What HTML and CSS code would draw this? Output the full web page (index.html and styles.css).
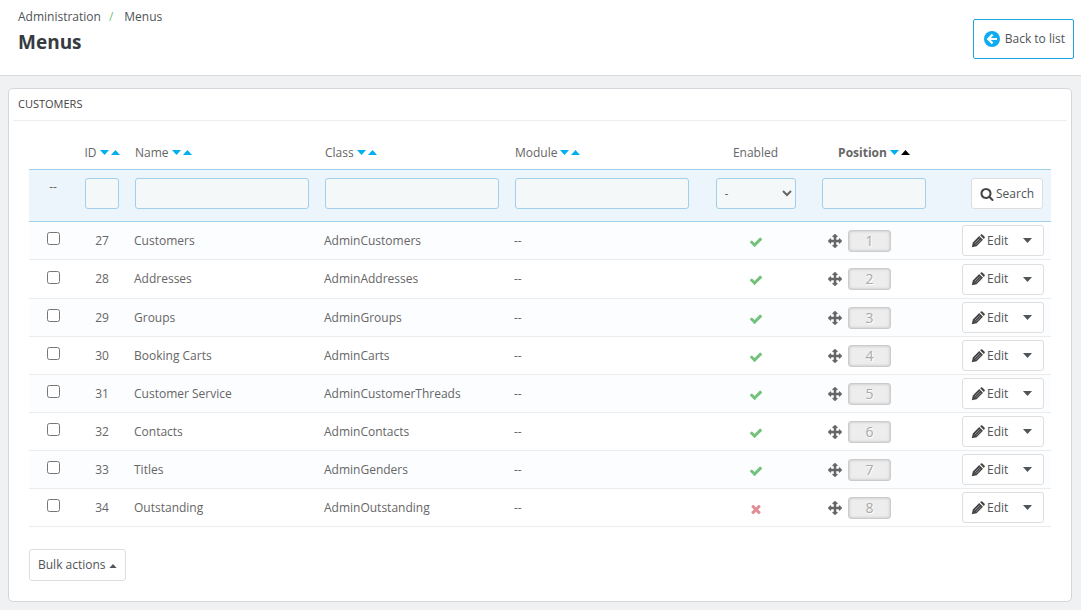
FILE: index.html
```html
<!DOCTYPE html>
<html lang="en">
<head>
<meta charset="utf-8">
<title>Menus</title>
<link rel="stylesheet" href="styles.css">
</head>
<body>
<svg class="sprite" aria-hidden="true">
  <symbol id="check" viewBox="0 0 1792 1792"><path d="M1671 566q0 40-28 68l-724 724-136 136q-28 28-68 28t-68-28l-136-136-362-362q-28-28-28-68t28-68l136-136q28-28 68-28t68 28l294 295 656-657q28-28 68-28t68 28l136 136q28 28 28 68z"/></symbol>
  <symbol id="times" viewBox="0 0 1792 1792"><path d="M1490 1322q0 40-28 68l-136 136q-28 28-68 28t-68-28l-294-294-294 294q-28 28-68 28t-68-28l-136-136q-28-28-28-68t28-68l294-294-294-294q-28-28-28-68t28-68l136-136q28-28 68-28t68 28l294 294 294-294q28-28 68-28t68 28l136 136q28 28 28 68t-28 68l-294 294 294 294q28 28 28 68z"/></symbol>
  <symbol id="move" viewBox="0 0 1792 1792"><path stroke="currentColor" stroke-width="60" d="M1792 896q0 26-19 45l-256 256q-19 19-45 19t-45-19-19-45v-128h-384v384h128q26 0 45 19t19 45-19 45l-256 256q-19 19-45 19t-45-19l-256-256q-19-19-19-45t19-45 45-19h128v-384h-384v128q0 26-19 45t-45 19-45-19l-256-256q-19-19-19-45t19-45l256-256q19-19 45-19t45 19 19 45v128h384v-384h-128q-26 0-45-19t-19-45 19-45l256-256q19-19 45-19t45 19l256 256q19 19 19 45t-19 45-45 19h-128v384h384v-128q0-26 19-45t45-19 45 19l256 256q19 19 19 45z"/></symbol>
  <symbol id="pencil" viewBox="0 0 14 14"><path d="M.8 13.200l1-4.800L8.200 2l3.800 3.800L5.600 12.200zM9.100 1.200l.9-.8q.7-.5 1.300 0l2.300 2.300q.5.600 0 1.300l-.8.900z"/><path d="M3.600 9.400l5-5M4.900 10.700l5-5" fill="none" stroke="#fff" stroke-width=".4"/></symbol>
  <symbol id="search" viewBox="0 0 1792 1792"><path d="M1216 832q0-185-131.500-316.500t-316.500-131.500-316.500 131.500-131.500 316.500 131.500 316.500 316.500 131.500 316.500-131.500 131.500-316.500zm512 832q0 52-38 90t-90 38q-54 0-90-38l-343-342q-179 124-399 124-143 0-273.500-55.500t-225-150-150-225-55.500-273.500 55.500-273.500 150-225 225-150 273.500-55.500 273.500 55.500 225 150 150 225 55.500 273.500q0 220-124 399l343 343q37 37 37 90z"/></symbol>
  <symbol id="back" viewBox="0 0 16 16"><circle cx="8" cy="8" r="8"/><path d="M13 8H4.500M8.600 3.600L4.200 8l4.400 4.400" fill="none" stroke="#fff" stroke-width="2.200"/></symbol>
  <symbol id="down" viewBox="0 0 9 5"><path d="M0 0h9L4.500 5z"/></symbol>
  <symbol id="up" viewBox="0 0 9 5"><path d="M0 5h9L4.500 0z"/></symbol>
</svg>
<header class="page-head">
  <div>
    <nav class="breadcrumb" aria-label="Breadcrumb"><a href="#">Administration</a><span class="slash">/</span><a href="#">Menus</a></nav>
    <h1>Menus</h1>
  </div>
  <a class="back" href="#"><svg class="icon16"><use href="#back"/></svg>Back to list</a>
</header>
<main class="panel">
  <h2>CUSTOMERS</h2>
  <div class="panel-body">
    <table>
      <colgroup><col class="c-check"><col class="c-id"><col><col><col><col class="c-enabled"><col class="c-position"><col class="c-actions"></colgroup>
      <thead>
        <tr class="titles">
          <th></th>
          <th class="center"><span class="sort">ID <svg><use href="#down"/></svg><svg><use href="#up"/></svg></span></th>
          <th><span class="sort">Name <svg><use href="#down"/></svg><svg><use href="#up"/></svg></span></th>
          <th><span class="sort">Class <svg><use href="#down"/></svg><svg><use href="#up"/></svg></span></th>
          <th><span class="sort">Module <svg><use href="#down"/></svg><svg><use href="#up"/></svg></span></th>
          <th class="center">Enabled</th>
          <th class="center"><span class="sort sorted">Position <svg><use href="#down"/></svg><svg class="on"><use href="#up"/></svg></span></th>
          <th></th>
        </tr>
        <tr class="filters">
          <td class="center">--</td>
          <td><input type="text" aria-label="ID"></td>
          <td><input type="text" aria-label="Name"></td>
          <td><input type="text" aria-label="Class"></td>
          <td><input type="text" aria-label="Module"></td>
          <td class="center"><select aria-label="Enabled"><option>-</option><option>Yes</option><option>No</option></select></td>
          <td><input type="text" aria-label="Position"></td>
          <td class="right"><button class="btn search" type="button"><svg class="icon14"><use href="#search"/></svg>Search</button></td>
        </tr>
      </thead>
      <tbody>
        <tr><td class="center"><input type="checkbox" aria-label="Customers"></td><td class="center">27</td><td>Customers</td><td>AdminCustomers</td><td>--</td><td class="center"><svg class="state yes"><use href="#check"/></svg></td><td><div class="pos"><svg class="icon14"><use href="#move"/></svg><span class="badge">1</span></div></td><td><div class="group"><button type="button" class="edit"><svg class="icon14"><use href="#pencil"/></svg>Edit</button><button type="button" class="more" aria-label="More"><svg class="caret"><use href="#down"/></svg></button></div></td></tr>
        <tr><td class="center"><input type="checkbox" aria-label="Addresses"></td><td class="center">28</td><td>Addresses</td><td>AdminAddresses</td><td>--</td><td class="center"><svg class="state yes"><use href="#check"/></svg></td><td><div class="pos"><svg class="icon14"><use href="#move"/></svg><span class="badge">2</span></div></td><td><div class="group"><button type="button" class="edit"><svg class="icon14"><use href="#pencil"/></svg>Edit</button><button type="button" class="more" aria-label="More"><svg class="caret"><use href="#down"/></svg></button></div></td></tr>
        <tr><td class="center"><input type="checkbox" aria-label="Groups"></td><td class="center">29</td><td>Groups</td><td>AdminGroups</td><td>--</td><td class="center"><svg class="state yes"><use href="#check"/></svg></td><td><div class="pos"><svg class="icon14"><use href="#move"/></svg><span class="badge">3</span></div></td><td><div class="group"><button type="button" class="edit"><svg class="icon14"><use href="#pencil"/></svg>Edit</button><button type="button" class="more" aria-label="More"><svg class="caret"><use href="#down"/></svg></button></div></td></tr>
        <tr><td class="center"><input type="checkbox" aria-label="Booking Carts"></td><td class="center">30</td><td>Booking Carts</td><td>AdminCarts</td><td>--</td><td class="center"><svg class="state yes"><use href="#check"/></svg></td><td><div class="pos"><svg class="icon14"><use href="#move"/></svg><span class="badge">4</span></div></td><td><div class="group"><button type="button" class="edit"><svg class="icon14"><use href="#pencil"/></svg>Edit</button><button type="button" class="more" aria-label="More"><svg class="caret"><use href="#down"/></svg></button></div></td></tr>
        <tr><td class="center"><input type="checkbox" aria-label="Customer Service"></td><td class="center">31</td><td>Customer Service</td><td>AdminCustomerThreads</td><td>--</td><td class="center"><svg class="state yes"><use href="#check"/></svg></td><td><div class="pos"><svg class="icon14"><use href="#move"/></svg><span class="badge">5</span></div></td><td><div class="group"><button type="button" class="edit"><svg class="icon14"><use href="#pencil"/></svg>Edit</button><button type="button" class="more" aria-label="More"><svg class="caret"><use href="#down"/></svg></button></div></td></tr>
        <tr><td class="center"><input type="checkbox" aria-label="Contacts"></td><td class="center">32</td><td>Contacts</td><td>AdminContacts</td><td>--</td><td class="center"><svg class="state yes"><use href="#check"/></svg></td><td><div class="pos"><svg class="icon14"><use href="#move"/></svg><span class="badge">6</span></div></td><td><div class="group"><button type="button" class="edit"><svg class="icon14"><use href="#pencil"/></svg>Edit</button><button type="button" class="more" aria-label="More"><svg class="caret"><use href="#down"/></svg></button></div></td></tr>
        <tr><td class="center"><input type="checkbox" aria-label="Titles"></td><td class="center">33</td><td>Titles</td><td>AdminGenders</td><td>--</td><td class="center"><svg class="state yes"><use href="#check"/></svg></td><td><div class="pos"><svg class="icon14"><use href="#move"/></svg><span class="badge">7</span></div></td><td><div class="group"><button type="button" class="edit"><svg class="icon14"><use href="#pencil"/></svg>Edit</button><button type="button" class="more" aria-label="More"><svg class="caret"><use href="#down"/></svg></button></div></td></tr>
        <tr><td class="center"><input type="checkbox" aria-label="Outstanding"></td><td class="center">34</td><td>Outstanding</td><td>AdminOutstanding</td><td>--</td><td class="center"><svg class="state no"><use href="#times"/></svg></td><td><div class="pos"><svg class="icon14"><use href="#move"/></svg><span class="badge">8</span></div></td><td><div class="group"><button type="button" class="edit"><svg class="icon14"><use href="#pencil"/></svg>Edit</button><button type="button" class="more" aria-label="More"><svg class="caret"><use href="#down"/></svg></button></div></td></tr>
      </tbody>
    </table>
    <button class="btn bulk" type="button">Bulk actions <svg><use href="#up"/></svg></button>
  </div>
</main>
</body>
</html>
```
FILE: styles.css
```css
* { box-sizing: border-box; }
body {
  margin: 0;
  background: #eff1f3;
  color: #666;
  font: 12px/18px "Open Sans", sans-serif;
}
button, input, select { font: inherit; color: inherit; }
a { color: inherit; text-decoration: none; }
svg { fill: currentColor; flex: none; overflow: visible; }
.sprite { position: absolute; width: 0; height: 0; }
.icon16 { width: 16px; height: 16px; }
.icon14 { width: 14px; height: 14px; }

.page-head {
  display: flex;
  justify-content: space-between;
  align-items: flex-start;
  height: 76px;
  padding: 8px 7px 0 18px;
  background: #fff;
  border-bottom: 1px solid #d8dadd;
  color: #4e5457;
}
.slash { margin: 0 11px 0 8px; color: #72c279; }
h1 {
  margin: 3px 0 0;
  font-size: 19px;
  line-height: 26px;
  color: #363a41;
}
.back {
  display: flex;
  align-items: center;
  gap: 5px;
  height: 40px;
  margin-top: 11px;
  padding: 0 8px 0 10px;
  border: 1px solid #1ba4e0;
  border-radius: 2px;
}
.back svg { color: #0fabf0; }

.panel {
  margin: 12px 9px 0 8px;
  padding: 0 4px 20px;
  background: #fff;
  border: 1px solid #d3d6db;
  border-radius: 5px;
}
h2 {
  margin: 0;
  padding: 0 5px;
  height: 32px;
  border-bottom: 1px solid #eceef0;
  font: 11px/30px "Open Sans", sans-serif;
  color: #444;
}
.panel-body { padding: 15px 16px 0; }
table { width: 100%; table-layout: fixed; border-collapse: separate; border-spacing: 0; }
.c-check { width: 48px; }
.c-id { width: 50px; }
.c-enabled { width: 117px; }
.c-position { width: 120px; }
.c-actions { width: 117px; }
th, td { padding: 0 7px; text-align: left; font-weight: normal; white-space: nowrap; }
.center { text-align: center; }
.right { text-align: right; }
.titles th { height: 34px; padding: 0 8px; border-bottom: 1px solid #a0d0eb; }
.titles .center { padding: 0; }
.sort { display: inline-flex; align-items: center; gap: 2px; }
.sort svg { width: 9px; height: 5px; color: #00aff0; }
.sort svg:first-child { margin-left: 1px; }
.sorted { font-weight: bold; }
.sort .on { color: #000; }
.filters td {
  height: 52px;
  padding: 8px 8px 12px;
  background: #edf5fc;
  border-bottom: 1px solid #a0d0eb;
  vertical-align: top;
}
.filters input, .filters select {
  display: block;
  width: 100%;
  height: 31px;
  background: #f5f8f9;
  border: 1px solid #a0d0eb;
  border-radius: 3px;
}
.filters select { width: 80px; margin: 0 auto; padding: 0 4px; }
.btn, .group { background: #fff; border: 1px solid #dedede; border-radius: 3px; color: #4e5457; }
.search { display: inline-flex; align-items: center; gap: 2px; height: 31px; padding: 0 8px; }

tbody td { height: 38px; border-bottom: 1px solid #eaedef; }
tbody tr:nth-child(2) td { height: 39px; }
tbody tr:nth-child(odd) { background: #fcfdfe; }
tbody input { display: block; width: 13px; height: 13px; margin: 0 auto 4px; }
.state { display: block; width: 14px; height: 14px; margin: 2px auto 0; }
.yes { color: #72c279; }
.no { color: #e08f95; }
.pos { display: flex; align-items: center; gap: 6px; padding-left: 7px; }
.badge {
  width: 43px;
  height: 22px;
  background: #ededed;
  border: 1px solid #ccc;
  border-radius: 3px;
  box-shadow: inset 0 0 3px #bbb;
  color: #aaa;
  font-size: 14px;
  line-height: 20px;
  text-align: center;
  text-shadow: 1px 1px #fff;
}
.group { display: flex; width: 82px; height: 31px; margin-left: auto; }
.group button { display: flex; align-items: center; padding: 0; background: none; border: 0; }
.group .edit { gap: 2px; padding-left: 8px; }
.edit svg, .search svg { color: #444; }
.group .more { flex: 1; justify-content: flex-end; padding-right: 11px; }
.caret { width: 9px; height: 5px; }
.bulk { display: flex; align-items: center; gap: 3px; height: 32px; margin-top: 22px; padding: 0 8px; }
.bulk svg { width: 8px; height: 4px; margin-top: 2px; }
```
